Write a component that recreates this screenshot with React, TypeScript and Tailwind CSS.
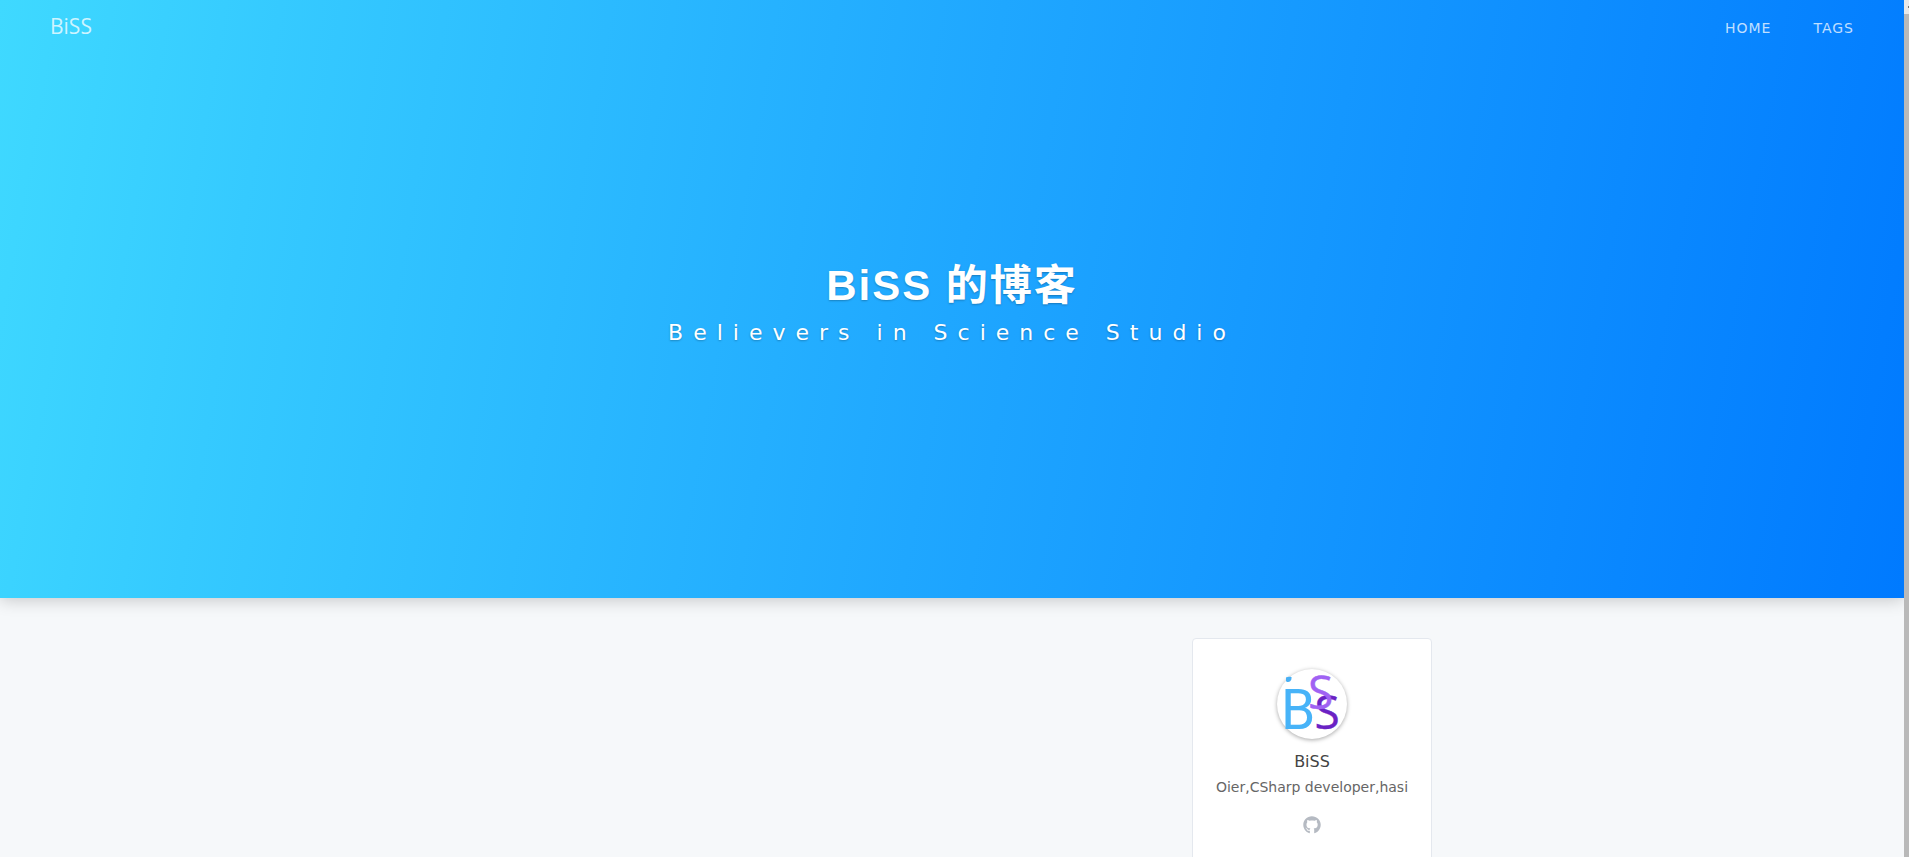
import { FaGithub } from "react-icons/fa";

const links = ["HOME", "TAGS"];

function Avatar() {
  return (
    <svg
      viewBox="0 0 70 70"
      role="img"
      aria-label="BiSS avatar"
      className="size-[70px] overflow-visible rounded-full bg-white font-['Open_Sans',sans-serif] shadow-[0_1px_4px_rgba(0,0,0,0.35)]"
    >
      <path d="M9 8.6 C10.4 7.6 14.6 7.4 14.6 8.4 C14.6 11.4 12.8 13 11 13 C10 13 9.3 12.6 9 12Z" fill="#47b0f5" />
      <text x="4" y="60" fontSize="55" fill="#47b3f8" className="font-['Roboto',sans-serif]">B</text>
      <text x="37.5" y="60" fontSize="46" fill="#6a22c4" stroke="#6a22c4" strokeWidth="0.4">S</text>
      <text x="31" y="39.6" fontSize="46" fill="#a062f3" stroke="#a062f3" strokeWidth="0.4">S</text>
    </svg>
  );
}

export default function App() {
  return (
    <div className="flex h-screen overflow-hidden bg-[#f6f8fa] font-['DejaVu_Sans',sans-serif]">
      <div className="min-w-0 flex-1">
        <header className="flex h-[598px] flex-col bg-[linear-gradient(100deg,#3fd9ff_0%,#35caff_14%,#1fa7ff_50%,#007aff_100%)] shadow-[0_2px_16px_rgba(0,0,0,0.2)]">
          <nav className="flex h-14 items-center justify-between px-[50px] text-white/75">
            <a href="#" className="pb-0.5 font-['Open_Sans',sans-serif] text-[21px]">BiSS</a>
            <div className="flex gap-[42px]">
              {links.map((link) => (
                <a key={link} href={`#${link.toLowerCase()}`} className="text-sm tracking-[1px]">
                  {link}
                </a>
              ))}
            </div>
          </nav>
          <div className="flex flex-1 flex-col items-center justify-center pb-11 text-white [text-shadow:0_1px_2px_rgba(0,0,0,0.25)]">
            <h1 className="font-['Liberation_Sans','Noto_Sans_CJK_SC',sans-serif] text-[42px] leading-[56px] font-bold tracking-[2px]">
              BiSS 的博客
            </h1>
            <p className="text-[22px] leading-[38px] tracking-[10px]">Believers in Science Studio</p>
          </div>
        </header>
        <main className="mx-auto flex max-w-[1000px] justify-end px-5 pt-10">
          <aside className="flex h-[260px] w-60 flex-col items-center rounded border border-[#e4e8ee] bg-white pt-[30px] text-center">
            <Avatar />
            <h2 className="mt-[11px] text-base leading-6 text-[#444]">BiSS</h2>
            <p className="text-sm leading-[26px] text-[#666]">Oier,CSharp developer,hasi</p>
            <a href="#github" aria-label="GitHub" className="mt-4 text-[#b5bac2]">
              <FaGithub size={18} />
            </a>
          </aside>
        </main>
      </div>
      <div aria-hidden="true" className="flex w-[5px] flex-col bg-[#b9b9b9]">
        <div className="h-3.5 bg-[#e9e9e9] pt-1.5">
          <div className="ml-auto h-0.5 w-px bg-[#777]" />
        </div>
      </div>
    </div>
  );
}
